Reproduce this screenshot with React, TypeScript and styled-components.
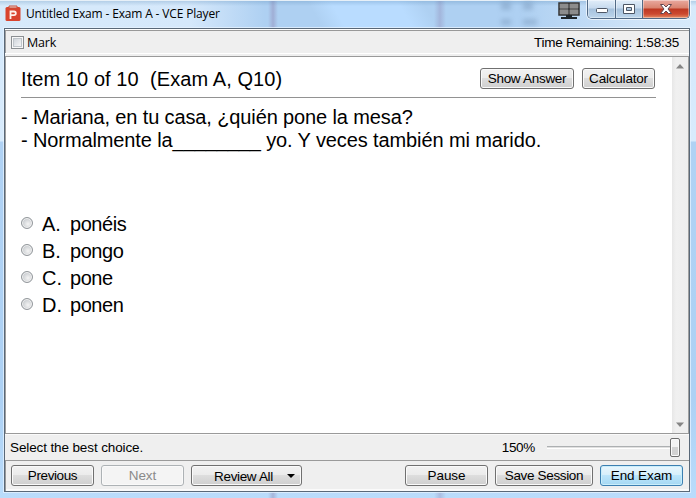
import React from "react";
import styled, { createGlobalStyle } from "styled-components";

const GlobalStyle = createGlobalStyle`
  * { box-sizing: border-box; }
  body { margin: 0; overflow: hidden; font-family: "Liberation Sans", Arial, sans-serif; color: #000; }
  button { font-family: inherit; }
`;

const Window = styled.main`
  width: 696px;
  height: 498px;
  display: flex;
  flex-direction: column;
  padding: 0 6px 6px 4px;
  border-top: 1px solid #e7f0f8;
  background:
    linear-gradient(90deg, transparent 268px, rgba(142, 133, 178, 0.45) 273px, transparent 278px),
    linear-gradient(90deg, transparent 434px, rgba(142, 133, 178, 0.35) 440px, transparent 446px),
    linear-gradient(90deg, #d7eafb 0, #d5e8fb 190px, rgba(213, 232, 251, 0) 265px) top / 100% 28px no-repeat,
    linear-gradient(90deg, rgba(216, 233, 250, 0) 520px, rgba(216, 233, 250, 0.8) 640px, #d7eafb) top / 100% 28px no-repeat,
    linear-gradient(60deg, rgba(185, 220, 255, 0) 280px, #b9dcff 300px, #b9dcff 358px, rgba(185, 220, 255, 0) 380px) top / 100% 28px no-repeat,
    linear-gradient(#aed0f2, #aed0f2) top / 100% 28px no-repeat,
    linear-gradient(180deg, #d4e9fc 0, #d8ebfc 140px, #b0d2f4 141px, #add1f4 400px, #badcfb 100%);
`;

const TitleBar = styled.header`
  height: 27px;
  flex: none;
  display: flex;
  align-items: flex-start;
  background: linear-gradient(rgba(80, 130, 175, 0.26), transparent 5px);
  margin: 0 -6px 0 -4px;
`;

const AppIcon = styled.svg`
  margin: 4px 0 0 5px;
`;

const Title = styled.h1`
  flex: 1;
  margin: 4px 0 0 5px;
  font: 12px/18px "Open Sans", "Noto Sans", sans-serif;
  letter-spacing: -0.16px;
  white-space: nowrap;
`;

const DisplayIcon = styled.svg`
  margin: 1px 7px 0 0;
`;

const Ghost = styled.span`
  width: 36px;
  height: 26px;
  margin: 0 21px 0 0;
  filter: blur(2.5px);
  background:
    linear-gradient(#6482a6, #6482a6) 0 1px / 10px 8px no-repeat,
    linear-gradient(#6482a6, #6482a6) 22px 1px / 10px 8px no-repeat,
    linear-gradient(#6482a6, #6482a6) 0 18px / 10px 6px no-repeat,
    linear-gradient(#6482a6, #6482a6) 22px 18px / 14px 6px no-repeat;
  opacity: 0.35;
`;

const Caption = styled.div`
  display: flex;
  width: 103px;
  height: 19px;
  margin: -1px 6px 0 0;
  border: 1px solid #526a86;
  border-top: 0;
  border-radius: 0 0 5px 5px;
  overflow: hidden;
  box-shadow: 0 0 0 1px rgba(255, 255, 255, 0.65);
`;

const CaptionButton = styled.button<{ $w: number; $close?: boolean }>`
  width: ${({ $w }) => $w}px;
  height: 18px;
  padding: 0;
  display: grid;
  place-items: center;
  border: 0;
  border-right: ${({ $close }) => ($close ? 0 : "1px solid #526a86")};
  box-shadow: inset 0 0 0 1px rgba(255, 255, 255, 0.38);
  background: ${({ $close }) =>
    $close
      ? "linear-gradient(#e9aaa0 0, #d9836f 8px, #bd3822 9px, #cc4930 14px, #e58b63 100%)"
      : "linear-gradient(#e1edf9 0, #c7daee 8px, #a6c1dc 9px, #bdd6ec 100%)"};
`;

const Frame = styled.section`
  flex: 1;
  min-height: 0;
  display: flex;
  flex-direction: column;
  border: 1px solid #596878;
  outline: 1px solid rgba(231, 243, 255, 0.75);
  background: #efefef;
`;

const MarkBar = styled.div`
  height: 25px;
  flex: none;
  display: flex;
  align-items: center;
  justify-content: space-between;
  padding: 2px 10px 0 6px;
  background:
    linear-gradient(#fff 0 1px, #999 1px 2px, transparent 2px 24px, #fff 24px),
    linear-gradient(90deg, #a0a0a0 0 1px, #efefef 1px);
  font-size: 13.5px;
`;

const MarkLabel = styled.label`
  display: flex;
  align-items: center;
  gap: 3px;
  font: 12.5px/18px "Open Sans", "Noto Sans", sans-serif;
  letter-spacing: -0.2px;
`;

const Check = styled.span`
  width: 13px;
  height: 13px;
  border: 1px solid #8b8f92;
  background: linear-gradient(135deg, #c5cbd2, #fff);
  box-shadow: inset 0 0 0 1px #f8f8f8, inset 0 0 0 2px #bfc5ca;
`;

const Timer = styled.span`
  letter-spacing: -0.23px;
  margin-top: -1px;
`;

const Viewport = styled.div`
  height: 377px;
  flex: none;
  display: flex;
  margin-top: 2px;
  border-top: 1px solid #9a9a9a;
  border-left: 1px solid #a0a0a0;
  border-right: 1px solid #a0a0a0;
  background: #fff;
`;

const Question = styled.article`
  flex: 1;
  padding: 0 16px 0 15px;
`;

const Heading = styled.div`
  height: 41px;
  display: flex;
  justify-content: space-between;
  align-items: flex-start;
  padding-top: 11px;
  border-bottom: 1px solid #929292;
`;

const ItemTitle = styled.h2`
  margin: -1px 0 0;
  font-size: 20px;
  line-height: 24px;
  font-weight: 400;
  white-space: pre;
  letter-spacing: 0.08px;
`;

const Actions = styled.div`
  display: flex;
  gap: 8px;
  margin-right: 1px;
`;

const Button = styled.button<{ $w: number; $tone?: "disabled" | "primary"; $spacing?: number }>`
  width: ${({ $w }) => $w}px;
  height: 21px;
  flex: none;
  padding: 0;
  display: flex;
  align-items: center;
  justify-content: center;
  font-size: 13.5px;
  line-height: 16px;
  white-space: nowrap;
  letter-spacing: ${({ $spacing = -0.3 }) => $spacing}px;
  border-radius: 3px;
  color: ${({ $tone }) => ($tone === "disabled" ? "#8a8a8a" : "#000")};
  border: 1px solid ${({ $tone }) => ($tone === "disabled" ? "#adb2b5" : $tone === "primary" ? "#3c7fb1" : "#707070")};
  box-shadow: inset 0 0 0 1px ${({ $tone }) => ($tone === "primary" ? "#c9eefb" : "#fafafa")};
  background: ${({ $tone }) =>
    $tone === "disabled"
      ? "#f4f4f4"
      : $tone === "primary"
        ? "linear-gradient(#e9f6fd 0, #d6effb 49%, #bce5fb 50%, #a5d8f3 100%)"
        : "linear-gradient(#f2f2f2 0, #ebebeb 49%, #dddddd 50%, #cfcfcf 100%)"};
`;

const Prompt = styled.div`
  height: 113px;
  padding-top: 8px;
`;

const Line = styled.p<{ $spacing: number }>`
  margin: 0;
  font-size: 20px;
  line-height: 23px;
  white-space: nowrap;
  letter-spacing: ${({ $spacing }) => $spacing}px;
`;

const Choice = styled.label`
  height: 27px;
  display: grid;
  grid-template-columns: 21px 28px 1fr;
  align-items: center;
  font-size: 20px;
  line-height: 24px;
`;

const ChoiceText = styled.span<{ $spacing?: number }>`
  margin-top: -2px;
  letter-spacing: ${({ $spacing = 0 }) => $spacing}px;
`;

const Radio = styled.span`
  width: 12px;
  height: 12px;
  margin-top: -3px;
  border: 1px solid #92979b;
  border-radius: 50%;
  background: radial-gradient(circle at 60% 60%, #f4f4f4, #c4c8cc 75%);
  box-shadow: inset 0 0 0 1px #f2f2f2;
`;

const ScrollBar = styled.div`
  width: 16px;
  display: flex;
  flex-direction: column;
  align-items: center;
  justify-content: space-between;
  padding: 7px 0 6px;
  background: linear-gradient(90deg, #e7e7e7, #f0f0f0 4px, #eee);
`;

const Status = styled.div`
  height: 27px;
  flex: none;
  display: flex;
  align-items: center;
  border-top: 1px solid #9a9a9a;
  box-shadow: inset 0 1px #fafafa;
  padding: 1px 9px 0 5px;
  font-size: 13.5px;
`;

const Hint = styled.span`
  flex: 1;
  letter-spacing: -0.12px;
`;

const Zoom = styled.span`
  letter-spacing: -0.3px;
`;

const Track = styled.div`
  width: 133px;
  height: 20px;
  margin-left: 12px;
  display: flex;
  align-items: center;
  justify-content: flex-end;
  background: linear-gradient(#adb0b2 0 1px, #e0e0e0 1px 2px, #fff 2px 3px) 0 8px / 124px 3px no-repeat;
`;

const Thumb = styled.span`
  width: 10px;
  height: 19px;
  border: 1px solid #6d6d6d;
  border-radius: 2px;
  box-shadow: inset 0 0 0 1px #fafafa;
  background: linear-gradient(#f2f2f2 50%, #d2d2d2 50%);
`;

const Footer = styled.footer`
  flex: 1;
  display: flex;
  align-items: flex-start;
  gap: 7px;
  border: 1px solid #9a9a9a;
  border-width: 1px 0 0 1px;
  box-shadow: inset 0 -2px #fafafa;
  padding: 4px 6px 0 5px;
`;

const Spacer = styled.span`
  flex: 1;
`;

const ReviewText = styled.span`
  margin: 2px 14px 0 16px;
`;

const choices = [["A.", "ponéis"], ["B.", "pongo"], ["C.", "pone"], ["D.", "ponen"]];

export default function App() {
  return (
    <>
      <GlobalStyle />
      <Window>
        <TitleBar>
          <AppIcon width="16" height="17" viewBox="0 0 16 17">
            <rect x="0.5" y="2" width="15" height="14" rx="1.5" fill="#d9442e" />
            <path d="M4 1h8v2H4z" fill="#ead0cb" stroke="#c94c38" />
            <path d="M5.500 14V6.500h3.500q1.800 0 1.800 1.800t-1.800 1.800h-3" fill="none" stroke="#fff3eb" strokeWidth="1.8" />
          </AppIcon>
          <Title>Untitled Exam - Exam A - VCE Player</Title>
          <Ghost />
          <DisplayIcon width="22" height="18" viewBox="0 0 22 18">
            <path d="M1 1h20v12H1z" fill="#aaa" stroke="#333" strokeWidth="1.5" />
            <path d="M2 2h8v4H2zm10 0h8v4h-8zM2 8h8v4H2zm10 0h8v4h-8z" fill="#8c8c8c" />
            <path d="M11 1v12M1 7h20" stroke="#292929" strokeWidth="1.2" />
            <path d="M8 13h6v2h5v2H3v-2h5z" fill="#1f262b" />
          </DisplayIcon>
          <Caption>
            <CaptionButton $w={28} aria-label="Minimize">
              <svg width="14" height="10"><rect x="1.500" y="4.500" width="11" height="4" rx="1" fill="#fff" stroke="#4d5665" /></svg>
            </CaptionButton>
            <CaptionButton $w={27} aria-label="Maximize">
              <svg width="14" height="12"><path fillRule="evenodd" d="M1.500 1.500h11v9h-11zM4.500 4.500h5v3h-5z" fill="#fff" stroke="#4d5665" /></svg>
            </CaptionButton>
            <CaptionButton $w={46} $close aria-label="Close">
              <svg width="14" height="12"><path d="M1.500 1.500h3L7 4l2.500-2.500h3L9 6l3.500 4.500h-3L7 8l-2.500 2.500h-3L5 6z" fill="#fff" stroke="#604650" /></svg>
            </CaptionButton>
          </Caption>
        </TitleBar>
        <Frame>
          <MarkBar>
            <MarkLabel><Check />Mark</MarkLabel>
            <Timer>Time Remaining: 1:58:35</Timer>
          </MarkBar>
          <Viewport>
            <Question>
              <Heading>
                <ItemTitle>{"Item 10 of 10  (Exam A, Q10)"}</ItemTitle>
                <Actions>
                  <Button $w={94}>Show Answer</Button>
                  <Button $w={73} $spacing={-0.2}>Calculator</Button>
                </Actions>
              </Heading>
              <Prompt>
                <Line $spacing={-0.12}>- Mariana, en tu casa, ¿quién pone la mesa?</Line>
                <Line $spacing={-0.11}>- Normalmente la________ yo. Y veces también mi marido.</Line>
              </Prompt>
              {choices.map(([letter, text]) => (
                <Choice key={letter}>
                  <Radio />
                  <ChoiceText>{letter}</ChoiceText>
                  <ChoiceText $spacing={-0.45}>{text}</ChoiceText>
                </Choice>
              ))}
            </Question>
            <ScrollBar>
              <svg width="8" height="5"><path d="M0 4.500L4 0l4 4.500z" fill="#858585" /></svg>
              <svg width="8" height="5"><path d="M0 .5h8L4 5z" fill="#858585" /></svg>
            </ScrollBar>
          </Viewport>
          <Status>
            <Hint>Select the best choice.</Hint>
            <Zoom>150%</Zoom>
            <Track><Thumb /></Track>
          </Status>
          <Footer>
            <Button $w={83} $spacing={-0.4}>Previous</Button>
            <Button $w={83} $tone="disabled" $spacing={-0.1}>Next</Button>
            <Button $w={111} $spacing={-0.35}>
              <ReviewText>Review All</ReviewText>
              <svg width="8" height="4"><path d="M0 0h8L4 4z" /></svg>
            </Button>
            <Spacer />
            <Button $w={83} $spacing={-0.1}>Pause</Button>
            <Button $w={98} $spacing={-0.35}>Save Session</Button>
            <Button $w={83} $tone="primary" $spacing={-0.1}>End Exam</Button>
          </Footer>
        </Frame>
      </Window>
    </>
  );
}
